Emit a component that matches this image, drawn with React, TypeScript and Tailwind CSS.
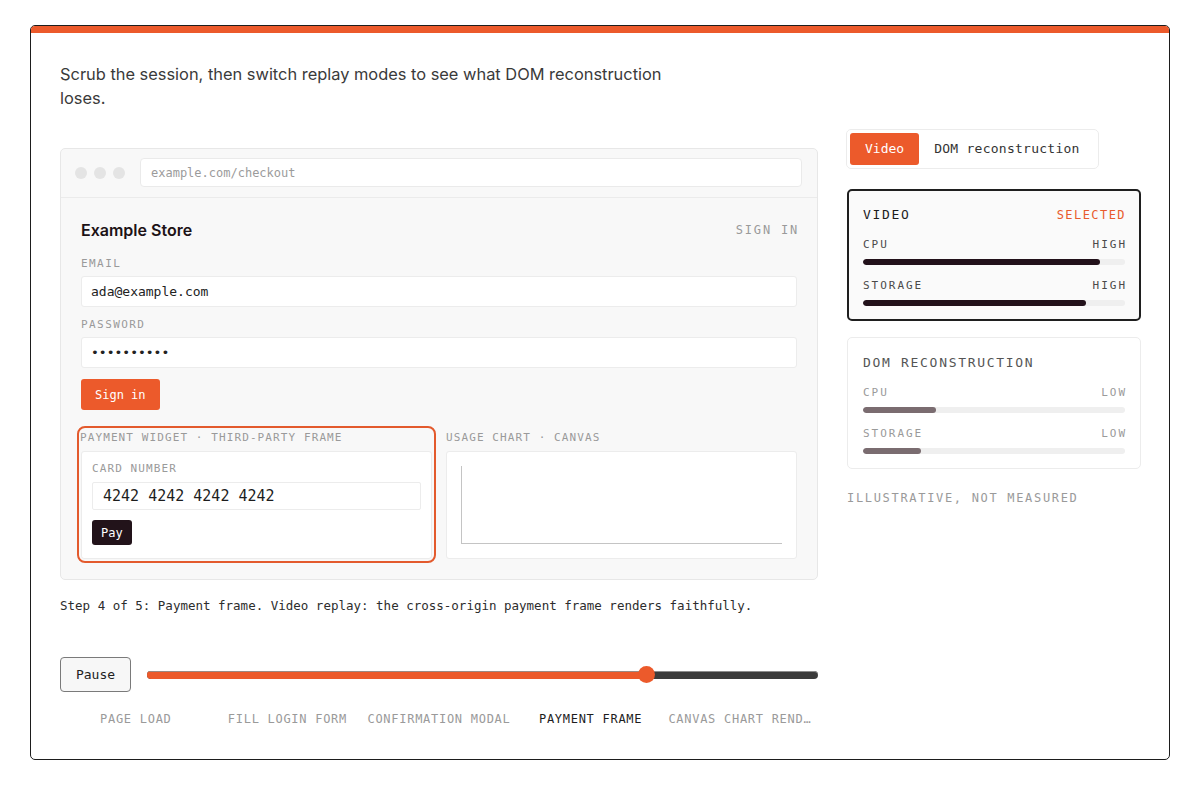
import React from "react";

const steps = [
  "Page load",
  "Fill login form",
  "Confirmation modal",
  "Payment frame",
  "Canvas chart rendering",
];

function Metric({
  label,
  value,
  pct,
  fill,
  labelColor,
  first,
}: {
  label: string;
  value: string;
  pct: number;
  fill: string;
  labelColor: string;
  first?: boolean;
}) {
  return (
    <div className={first ? "mt-[12px]" : "mt-[13px]"}>
      <div
        className={`flex justify-between text-[11px] leading-[16px] tracking-[0.18em] ${labelColor}`}
      >
        <span>{label}</span>
        <span className="mr-[-2px]">{value}</span>
      </div>
      <div className="mt-[6px] h-[6px] rounded-full bg-[#efefef] overflow-hidden">
        <div className={`h-full rounded-full ${fill}`} style={{ width: `${pct}%` }} />
      </div>
    </div>
  );
}

export default function App() {
  const current = 3;
  const ratio = current / (steps.length - 1);
  return (
    <div className="min-h-screen bg-white pt-[25px] px-[30px] pb-[36px] font-['DejaVu_Sans_Mono',monospace]">
      <div className="rounded-[5px] border border-[#1d1d1d] overflow-hidden bg-white">
        <div className="h-[7px] bg-[#ec5a2b]" />
        <div className="pl-[29px] pr-[28px] pt-[29px] pb-[32px]">
          <p className="font-['Inter',sans-serif] text-[16.4px] leading-[24px] text-[#3a3a3a] max-w-[630px]">
            Scrub the session, then switch replay modes to see what DOM reconstruction loses.
          </p>
          <div className="grid grid-cols-[1fr_295px] gap-[28px] mt-[19px]">
            {/* Left column */}
            <div className="mt-[19px]">
              <div className="rounded-[5px] border border-[#e7e7e7] bg-[#f8f8f8]">
                <div className="flex items-center pl-[14px] pr-[15px] pt-[9px] pb-[10px] border-b border-[#ebebeb]">
                  <div className="flex gap-[7px]">
                    <span className="w-3 h-3 rounded-full bg-[#e4e4e4]" />
                    <span className="w-3 h-3 rounded-full bg-[#e4e4e4]" />
                    <span className="w-3 h-3 rounded-full bg-[#e4e4e4]" />
                  </div>
                  <div className="ml-[15px] flex-1 h-[29px] bg-white border border-[#eaeaea] rounded-[4px] px-[10px] flex items-center text-[12px] text-[#9b9b9b]">
                    example.com/checkout
                  </div>
                </div>
                <div className="p-[20px]">
                  <div className="flex justify-between items-center h-[24px]">
                    <span className="font-['Inter',sans-serif] text-[16px] font-semibold text-[#1c1216]">
                      Example Store
                    </span>
                    <span className="text-[12px] tracking-[0.15em] text-[#9a9a9a] mr-[-2px]">SIGN IN</span>
                  </div>
                  <div className="mt-[15px] text-[11px] leading-[14px] tracking-[0.13em] text-[#9a9a9a]">EMAIL</div>
                  <div className="mt-[5px] h-[31px] bg-white border border-[#ececec] rounded-[3px] px-[9px] flex items-center text-[13px] text-[#222]">
                    ada@example.com
                  </div>
                  <div className="mt-[11px] text-[11px] leading-[14px] tracking-[0.13em] text-[#9a9a9a]">PASSWORD</div>
                  <div className="mt-[5px] h-[31px] bg-white border border-[#ececec] rounded-[3px] px-[9px] flex items-center text-[13px] text-[#222]">
                    ••••••••••
                  </div>
                  <button className="mt-[11px] h-[31px] px-[14px] bg-[#ec5a2b] text-white text-[12px] rounded-[3px]">
                    Sign in
                  </button>
                  <div className="mt-[20px] grid grid-cols-2 gap-[14px]">
                    <div className="flex flex-col rounded-[4px] outline-2 outline-solid outline-offset-2 outline-[#e35a2d]">
                      <div className="mt-px text-[11px] leading-[14px] tracking-[0.1em] text-[#9a9a9a] -ml-px">
                        PAYMENT WIDGET · THIRD-PARTY FRAME
                      </div>
                      <div className="mt-[6px] flex-1 bg-white border border-[#ececec] rounded-[3px] px-[10px] pt-[10px] pb-[13px]">
                        <div className="text-[11px] leading-[14px] tracking-[0.1em] text-[#9a9a9a]">CARD NUMBER</div>
                        <div className="mt-[6px] h-[28px] border border-[#ececec] rounded-[2px] pl-[10px] flex items-center text-[15px] text-[#1d1d1d]">
                          4242 4242 4242 4242
                        </div>
                        <button className="mt-[10px] h-[25px] px-[9px] bg-[#22131a] text-white text-[12px] rounded-[3px]">
                          Pay
                        </button>
                      </div>
                    </div>
                    <div className="flex flex-col">
                      <div className="mt-px text-[11px] leading-[14px] tracking-[0.1em] text-[#9a9a9a]">
                        USAGE CHART · CANVAS
                      </div>
                      <div className="mt-[6px] flex-1 bg-white border border-[#ececec] rounded-[3px] p-[14px] flex">
                        <div className="flex-1 border-l border-b border-[#c4c4c4]" />
                      </div>
                    </div>
                  </div>
                </div>
              </div>

              <p className="mt-[17px] text-[12.5px] leading-[18px] text-[#2d2d2d] whitespace-nowrap">
                Step 4 of 5: Payment frame. Video replay: the cross-origin payment frame renders faithfully.
              </p>

              <div className="mt-[42px] flex items-center gap-[16px]">
                <button className="h-[35px] w-[71px] border border-[#7a7a7a] rounded-[4px] bg-[#f7f7f7] text-[13px] text-[#222]">
                  Pause
                </button>
                <div className="relative flex-1 h-[17px] flex items-center">
                  <div className="w-full h-[8px] rounded-full bg-[#3b3b3b] shadow-[inset_0_1px_0_#8c8c8c] overflow-hidden">
                    <div
                      className="h-full bg-[#ec5a2b] shadow-[inset_0_1px_0_#9a8a84]"
                      style={{ width: `calc(${ratio} * (100% - 17px) + 8.5px)` }}
                    />
                  </div>
                  <div
                    className="absolute top-0 w-[17px] h-[17px] rounded-full bg-[#ec5a2b]"
                    style={{ left: `calc(${ratio} * (100% - 17px))` }}
                  />
                </div>
              </div>

              <div className="mt-[19px] grid grid-cols-5 text-[12px] leading-[16px] tracking-[0.06em]">
                {steps.map((s, i) => (
                  <div
                    key={s}
                    className={`px-[2px] text-center truncate ${i === current ? "text-[#1d1d1d]" : "text-[#9a9a9a]"}`}
                  >
                    {s.toUpperCase()}
                  </div>
                ))}
              </div>
            </div>

            {/* Right column */}
            <div>
              <div className="inline-flex p-[3px] border border-[#ececec] rounded-[5px] bg-white">
                <button className="h-[32px] px-[15px] bg-[#ec5a2b] text-white text-[13px] rounded-[3px]">
                  Video
                </button>
                <button className="h-[32px] px-[15px] text-[#333] text-[13px] tracking-[0.02em]">
                  DOM reconstruction
                </button>
              </div>

              <div className="mt-[20px] ml-px border-2 border-[#1f1f1f] rounded-[5px] bg-[#fafafa] px-[14px] pt-[14px] pb-[13px]">
                <div className="flex justify-between items-center h-[20px]">
                  <span className="text-[13px] tracking-[0.13em] text-[#1d1d1d]">VIDEO</span>
                  <span className="text-[12px] tracking-[0.12em] text-[#e85a2c] mr-[-1px]">SELECTED</span>
                </div>
                <Metric label="CPU" value="HIGH" pct={90.5} fill="bg-[#22111a]" labelColor="text-[#4a4a4a]" first />
                <Metric label="STORAGE" value="HIGH" pct={85} fill="bg-[#22111a]" labelColor="text-[#4a4a4a]" />
              </div>

              <div className="mt-[16px] ml-px border border-[#ececec] rounded-[5px] bg-white px-[15px] pt-[15px] pb-[14px]">
                <div className="flex justify-between items-center h-[20px]">
                  <span className="text-[13px] tracking-[0.13em] text-[#555]">DOM RECONSTRUCTION</span>
                </div>
                <Metric label="CPU" value="LOW" pct={28} fill="bg-[#7a6c70]" labelColor="text-[#9a9a9a]" first />
                <Metric label="STORAGE" value="LOW" pct={22} fill="bg-[#7a6c70]" labelColor="text-[#9a9a9a]" />
              </div>

              <div className="mt-[21px] ml-px text-[12px] leading-[16px] tracking-[0.14em] text-[#9a9a9a]">
                ILLUSTRATIVE, NOT MEASURED
              </div>
            </div>
          </div>
        </div>
      </div>
    </div>
  );
}
